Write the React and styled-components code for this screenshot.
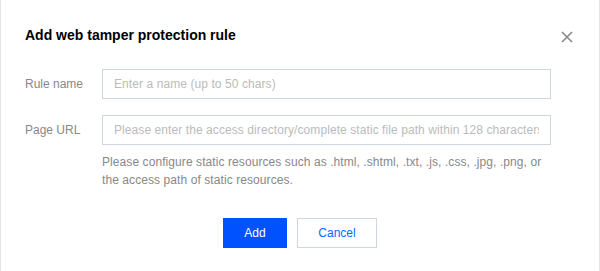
import React from "react";
import styled, { createGlobalStyle } from "styled-components";

const Global = createGlobalStyle`
  html, body { margin: 0; padding: 0; background: #fff; }
  body { font-family: "Liberation Sans", Arial, sans-serif; }
  * { box-sizing: border-box; }
`;

const Dialog = styled.div`
  width: 600px;
  height: 271px;
  background: #fff;
  border-left: 1px solid #e4e4e4;
  border-right: 1px solid #e4e4e4;
  padding: 24px 24px 0 24px;
  display: flex;
  flex-direction: column;
`;

const Header = styled.div`
  display: flex;
  align-items: center;
  justify-content: space-between;
  height: 22px;
`;

const Title = styled.h3`
  margin: 0;
  font-size: 14px;
  font-weight: bold;
  color: #000;
  line-height: 22px;
`;

const Close = styled.button`
  border: 0;
  background: none;
  padding: 0;
  width: 14px;
  height: 14px;
  margin-right: 1px;
  margin-top: 3px;
  display: flex;
  align-items: center;
  justify-content: center;
  cursor: pointer;
`;

const Form = styled.div`
  display: flex;
  flex-direction: column;
  gap: 16px;
  margin-top: 23px;
`;

const Row = styled.div`
  display: grid;
  grid-template-columns: 77px 449px;
  align-items: start;
`;

const Label = styled.label`
  font-size: 12px;
  color: #888;
  line-height: 30px;
`;

const Field = styled.div`
  display: flex;
  flex-direction: column;
`;

const Input = styled.input`
  width: 449px;
  height: 30px;
  border: 1px solid #cfd5de;
  padding: 0 11px;
  font-size: 12px;
  letter-spacing: 0.08px;
  font-family: "Liberation Sans", Arial, sans-serif;
  color: #000;
  outline: none;
  &::placeholder { color: #bbb; }
`;

const Help = styled.p`
  margin: 8px 0 0 0;
  font-size: 12px;
  letter-spacing: 0.08px;
  line-height: 18px;
  color: #888;
`;

const Footer = styled.div`
  display: flex;
  justify-content: center;
  gap: 10px;
  margin-top: 29px;
`;

const Button = styled.button`
  height: 30px;
  min-width: ${(p) => (p.$primary ? "64px" : "80px")};
  padding: 0 20px;
  font-size: 12px;
  font-family: "Liberation Sans", Arial, sans-serif;
  border: 1px solid ${(p) => (p.$primary ? "#0052ff" : "#cfd5de")};
  background: ${(p) => (p.$primary ? "#0052ff" : "#fff")};
  color: ${(p) => (p.$primary ? "#fff" : "#006eff")};
  cursor: pointer;
`;

export default function App() {
  return (
    <>
      <Global />
      <Dialog>
        <Header>
          <Title>Add web tamper protection rule</Title>
          <Close aria-label="close">
            <svg width="12" height="12" viewBox="0 0 12 12">
              <path d="M1 1 L11 11 M11 1 L1 11" stroke="#888" strokeWidth="1.6" />
            </svg>
          </Close>
        </Header>
        <Form>
          <Row>
            <Label>Rule name</Label>
            <Input placeholder="Enter a name (up to 50 chars)" />
          </Row>
          <Row>
            <Label>Page URL</Label>
            <Field>
              <Input placeholder="Please enter the access directory/complete static file path within 128 characters" />
              <Help>
                Please configure static resources such as .html, .shtml, .txt, .js, .css, .jpg, .png, or the access path of static resources.
              </Help>
            </Field>
          </Row>
        </Form>
        <Footer>
          <Button $primary>Add</Button>
          <Button>Cancel</Button>
        </Footer>
      </Dialog>
    </>
  );
}
